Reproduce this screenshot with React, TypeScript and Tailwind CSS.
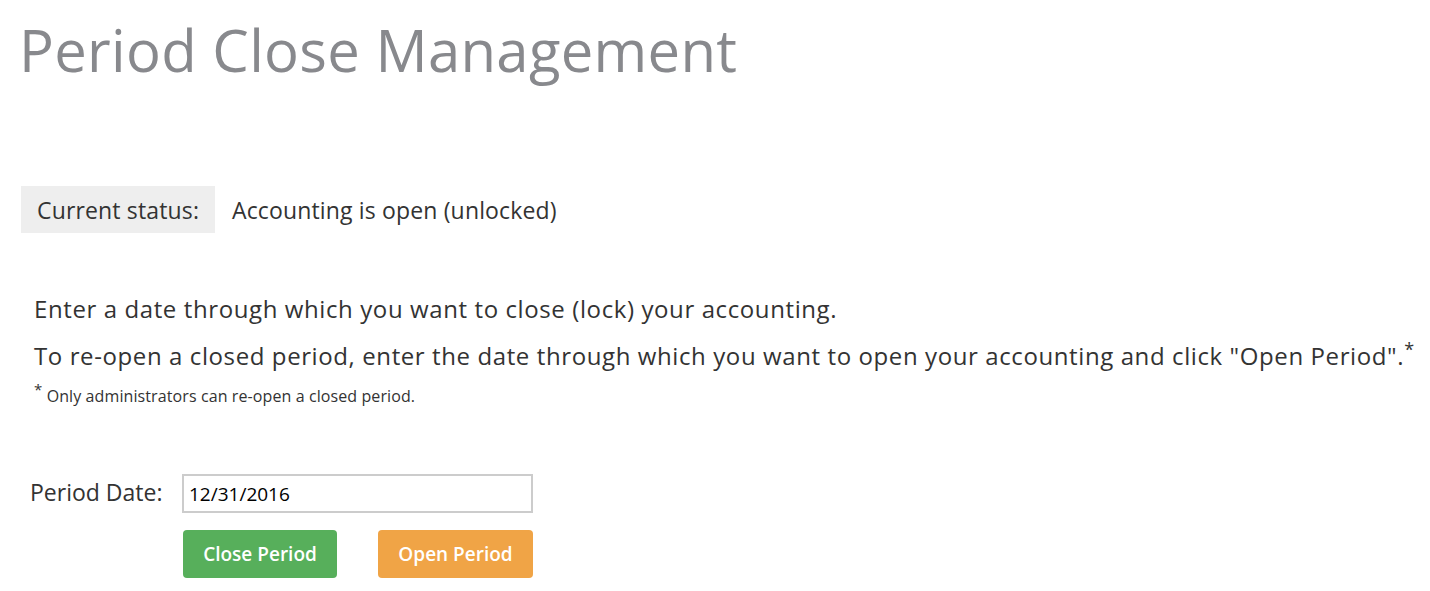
import { useState } from "react";

export default function App() {
  const [date, setDate] = useState("12/31/2016");

  return (
    <div className="min-h-screen bg-white font-['Open_Sans',sans-serif] text-[#333333]">
      <h1 className="pl-[19px] pt-[18px] text-[58px] font-normal leading-[64px] tracking-[0.3px] text-[#88898d]">
        Period Close Management
      </h1>

      <div className="ml-[21px] mt-[104px] flex items-center text-[23px] leading-[30px] tracking-[0.15px]">
        <div className="flex h-[47px] w-[194px] items-center bg-[#eeeeee] pl-[16px]">Current status:</div>
        <div className="ml-[17px]">Accounting is open (unlocked)</div>
      </div>

      <div className="ml-[34px] mt-[52px] text-[24px] leading-[47px] tracking-[0.6px]">
        <p>Enter a date through which you want to close (lock) your accounting.</p>
        <p>
          To re-open a closed period, enter the date through which you want to open your accounting and click "Open
          Period".<sup className="text-[18px]">*</sup>
        </p>
      </div>
      <p className="ml-[34px] mt-[7px] text-[16px] leading-[20px] tracking-[0.1px]">
        <sup className="text-[15px]">*</sup> Only administrators can re-open a closed period.
      </p>

      <div className="mt-[68px] flex items-start">
        <label className="ml-[30px] mt-[3px] w-[152px] text-[23px] leading-[30px]">Period Date:</label>
        <input
          type="text"
          value={date}
          onChange={(e) => setDate(e.target.value)}
          className="h-[39px] w-[351px] border-2 border-[#cccccc] px-[5px] text-[19px] text-black outline-none"
        />
      </div>

      <div className="ml-[183px] mt-[17px] flex gap-[41px]">
        <button className="h-[48px] w-[154px] rounded-[4px] bg-[#57af5b] text-[19px] font-semibold text-white">
          Close Period
        </button>
        <button className="h-[48px] w-[155px] rounded-[4px] bg-[#f0a446] text-[19px] font-semibold text-white">
          Open Period
        </button>
      </div>
    </div>
  );
}
